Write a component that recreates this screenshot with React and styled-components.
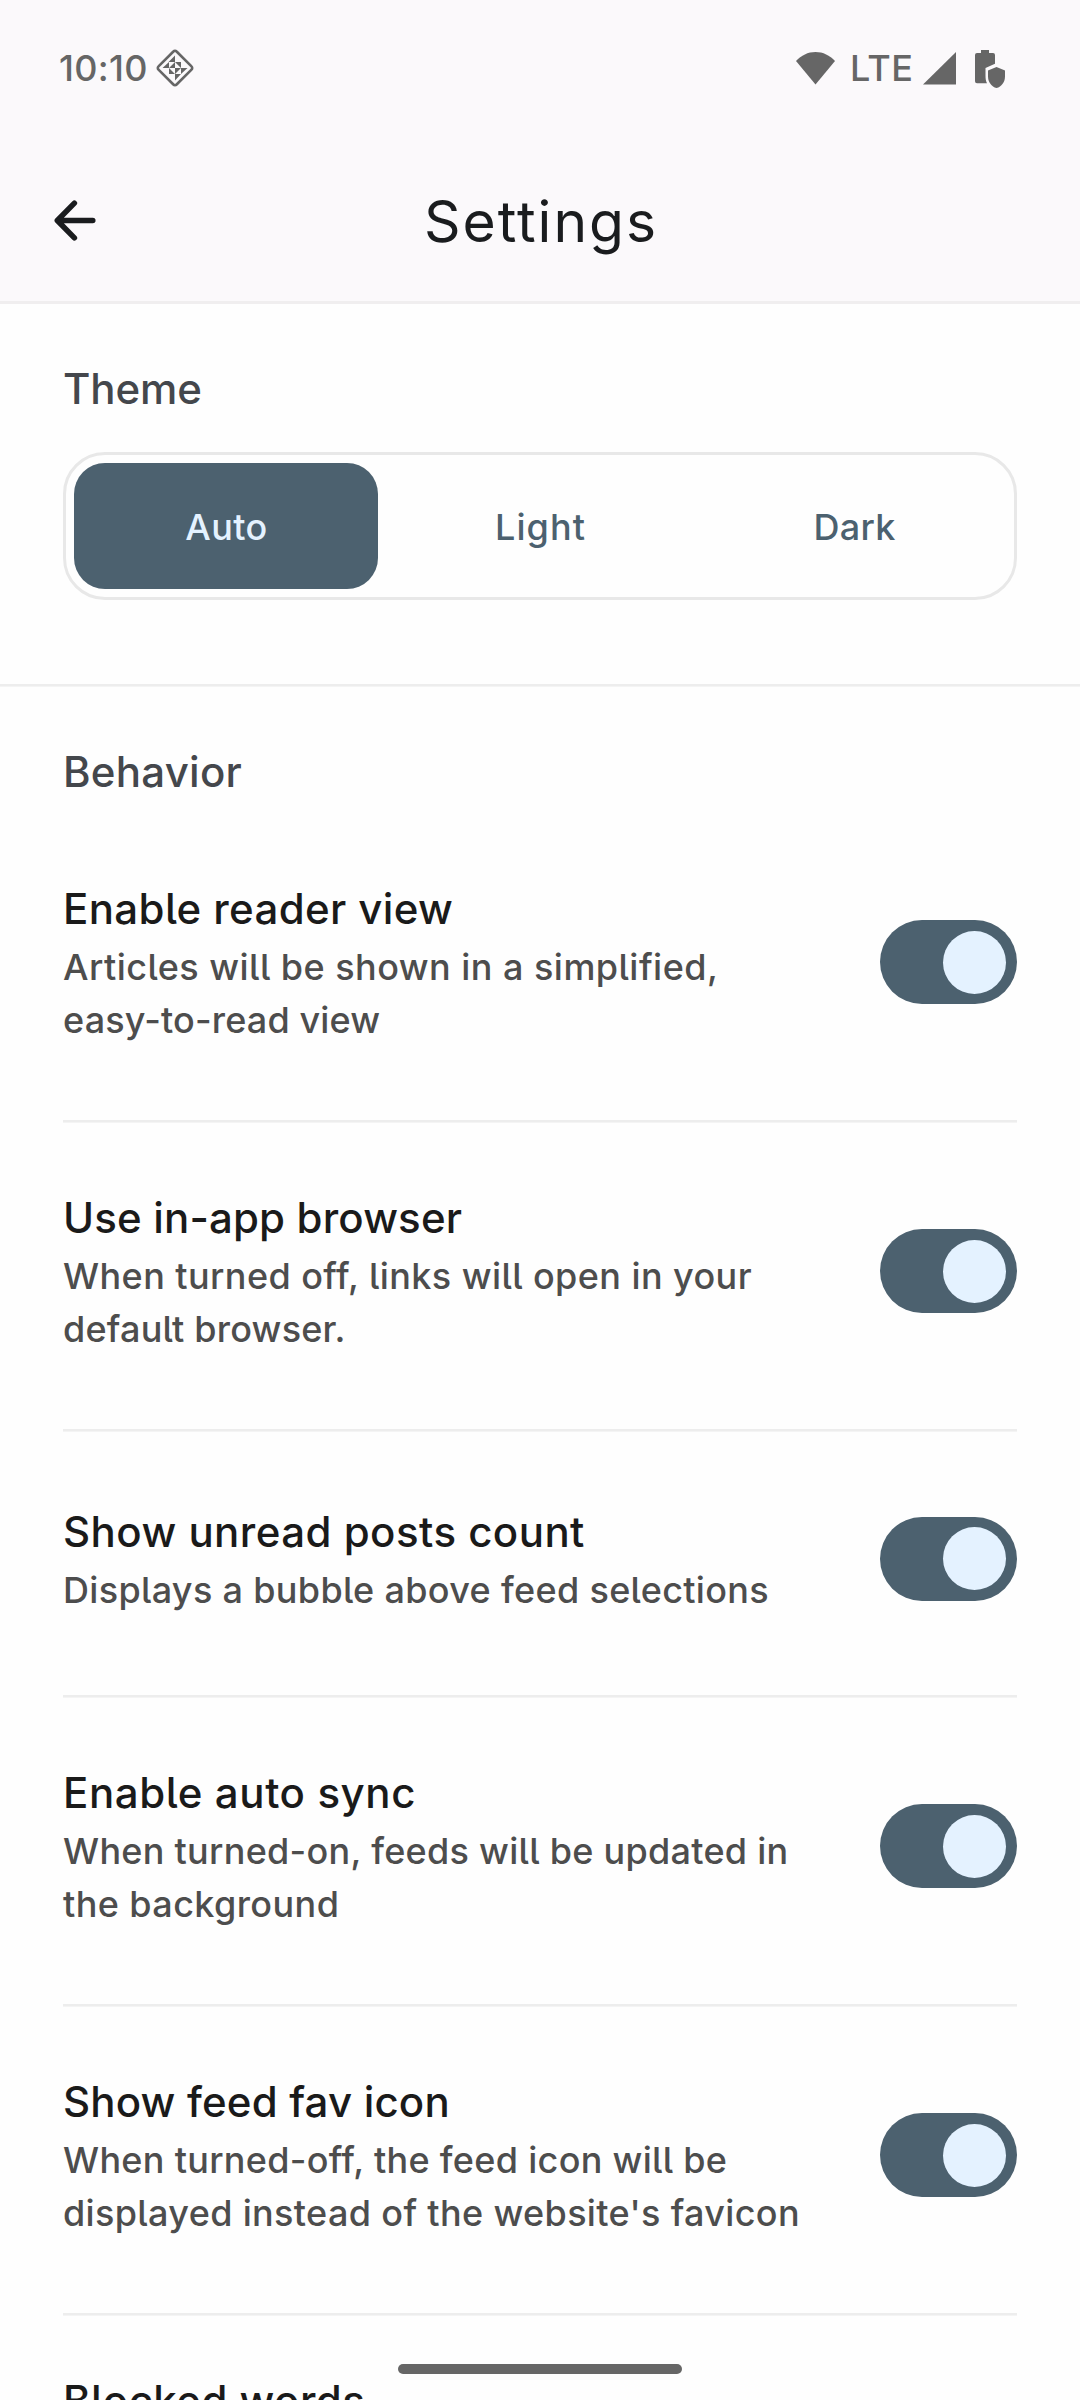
import React, { useState } from "react";
import styled, { createGlobalStyle } from "styled-components";

const slate = "#4c616f";
const ice = "#e4f2ff";

const GlobalStyle = createGlobalStyle`
  * { box-sizing: border-box; }
  body {
    margin: 0;
    background: #fefefe;
    font-family: Inter, "Liberation Sans", sans-serif;
    font-weight: 500;
    font-feature-settings: "cv05";
  }
`;

const Screen = styled.div`
  position: relative;
  width: 1080px;
  height: 2400px;
  overflow: hidden;
  background: #fefefe;
`;

const Header = styled.header`
  height: 304px;
  background: #fbf9fb;
  border-bottom: 3px solid #f0eeef;
`;

const StatusBar = styled.div`
  display: flex;
  align-items: center;
  height: 136px;
  padding: 0 75px 0 59px;
  color: #666;
  font-size: 36px;
  line-height: 44px;
`;

const Clock = styled.span`
  width: 97px;
  letter-spacing: 0.3px;
`;

const Spacer = styled.div`
  flex: 1;
`;

const Network = styled.span`
  width: 88px;
  padding-left: 15px;
  letter-spacing: 0.4px;
`;

const BatterySlot = styled.span`
  display: flex;
  margin-left: 19px;
  padding-top: 2px;
`;

const AppBar = styled.div`
  display: grid;
  grid-template-columns: 150px 1fr 150px;
  align-items: center;
  height: 165px;
  padding-top: 4px;
`;

const BackButton = styled.button`
  display: flex;
  padding: 0 0 0 54px;
  border: 0;
  background: none;
`;

const PageTitle = styled.h1`
  margin: 0;
  padding: 2px 0 0 2px;
  color: #1a1c1e;
  font-size: 57px;
  font-weight: 400;
  line-height: 64px;
  letter-spacing: 2px;
  text-align: center;
`;

const Section = styled.section`
  padding: 59px 63px 0;
`;

const SectionLabel = styled.h2`
  margin: 0;
  color: #44474c;
  font-size: 42px;
  font-weight: 500;
  line-height: 52px;
  letter-spacing: ${(p) => p.$spacing}px;
`;

const Segmented = styled.div`
  display: grid;
  grid-template-columns: repeat(3, 304px);
  justify-content: space-between;
  height: 148px;
  margin: 37px 0 84px;
  padding: 8px;
  border: 3px solid #e8e8e8;
  border-radius: 42px;
`;

const Segment = styled.button`
  padding: 2px 0 0 1px;
  border: 0;
  border-radius: 31px;
  background: ${(p) => (p.$active ? slate : "transparent")};
  color: ${(p) => (p.$active ? ice : slate)};
  font: 500 36px/44px Inter, "Liberation Sans", sans-serif;
  letter-spacing: ${(p) => p.$spacing}px;
`;

const Divider = styled.div`
  height: 3px;
  background: linear-gradient(#ededed 2px, #f4f4f4 2px);
`;

const List = styled.div`
  margin-top: 16px;
`;

const Row = styled.div`
  display: flex;
  align-items: center;
  justify-content: space-between;
  padding: ${(p) => (p.$single ? "70px 0 78px" : "65px 0 73px")};
`;

const RowTitle = styled.div`
  color: #1a1a1a;
  font-size: 42px;
  line-height: 60px;
  letter-spacing: ${(p) => p.$spacing}px;
  white-space: nowrap;
`;

const RowText = styled.div`
  padding-top: 2px;
  color: #4d4d4d;
  font-size: 36px;
  line-height: 53px;
`;

const Line = styled.span`
  display: block;
  letter-spacing: ${(p) => p.$spacing}px;
  white-space: nowrap;
`;

const Switch = styled.button`
  display: flex;
  align-items: center;
  justify-content: ${(p) => (p.$on ? "flex-end" : "flex-start")};
  width: 137px;
  height: 84px;
  margin: 0 0 2px;
  padding: 0 11px;
  border: 0;
  border-radius: 42px;
  background: ${(p) => (p.$on ? slate : "#d5dbe0")};
`;

const Thumb = styled.span`
  width: 63px;
  height: 63px;
  border-radius: 50%;
  background: ${ice};
`;

const NextRow = styled.div`
  padding-top: 55px;
`;

const HomeIndicator = styled.div`
  position: absolute;
  left: 398px;
  bottom: 26px;
  width: 284px;
  height: 10px;
  border-radius: 5px;
  background: #666;
`;

const DiamondIcon = () => (
  <svg width="38" height="38" viewBox="0 0 38 38" fill="#666">
    <path
      d="M17.4 2.5 2.5 17.4a2.2 2.2 0 0 0 0 3.2l14.9 14.9a2.2 2.2 0 0 0 3.2 0l14.9-14.9a2.2 2.2 0 0 0 0-3.2L20.6 2.5a2.2 2.2 0 0 0-3.2 0Z"
      fill="none"
      stroke="#666"
      strokeWidth="2.6"
    />
    <path d="M19 6.500V13H12.500ZM13 13V19H6.500ZM31.500 19H25V25ZM25 25H19V31.500ZM19 13H25V19ZM13 19V25H19ZM19 13V19H13ZM19 19H25L19 25Z" />
  </svg>
);

const WifiIcon = () => (
  <svg width="39" height="33" viewBox="0 0 39 33" fill="#666">
    <path d="M0 9C5.2 3.4 12 0 19.5 0S33.800 3.400 39 9L19.500 32.500Z" />
  </svg>
);

const SignalIcon = () => (
  <svg width="33" height="33" viewBox="0 0 33 33" fill="#666">
    <path d="M33 0V32.500H0Z" />
  </svg>
);

const BatteryShieldIcon = () => (
  <svg width="30" height="38" viewBox="0 0 30 38" fill="#666">
    <path d="M6 0H14V3H18Q20 3 20 5V13.800L10.500 18V25.500C10.500 28.500 10.800 31 12 33.300H2Q0 33.300 0 31.300V5Q0 3 2 3H6Z" />
    <path d="M21.500 17 30 20.500V26.500C30 32 26.500 36.800 21.500 38C16.500 36.800 13 32 13 26.500V20.500Z" />
  </svg>
);

const BackIcon = () => (
  <svg
    width="42"
    height="42"
    viewBox="0 0 42 42"
    fill="none"
    stroke="#1a1c1e"
    strokeWidth="5.500"
    strokeLinecap="round"
    strokeLinejoin="round"
  >
    <path d="M38.800 20.500H3.500M20.400 3.100 3.300 20.500 20.400 37.900" />
  </svg>
);

const themes = [
  { name: "Auto", spacing: 0.4 },
  { name: "Light", spacing: 1.1 },
  { name: "Dark", spacing: 0.3 },
];

const options = [
  {
    title: "Enable reader view",
    spacing: 0.37,
    lines: [
      ["Articles will be shown in a simplified,", 0.47],
      ["easy-to-read view", 0.15],
    ],
  },
  {
    title: "Use in-app browser",
    spacing: 0.16,
    lines: [
      ["When turned off, links will open in your", 0.42],
      ["default browser.", 0.2],
    ],
  },
  {
    title: "Show unread posts count",
    spacing: 0.46,
    lines: [["Displays a bubble above feed selections", 0.33]],
  },
  {
    title: "Enable auto sync",
    spacing: 0.6,
    lines: [
      ["When turned-on, feeds will be updated in", 0.28],
      ["the background", 0.4],
    ],
  },
  {
    title: "Show feed fav icon",
    spacing: 0.18,
    lines: [
      ["When turned-off, the feed icon will be", 0.3],
      ["displayed instead of the website's favicon", 0.35],
    ],
  },
];

function Option({ title, spacing, lines }) {
  const [on, setOn] = useState(true);
  return (
    <>
      <Row $single={lines.length === 1}>
        <div>
          <RowTitle $spacing={spacing}>{title}</RowTitle>
          <RowText>
            {lines.map(([text, gap]) => (
              <Line key={text} $spacing={gap}>
                {text}
              </Line>
            ))}
          </RowText>
        </div>
        <Switch role="switch" aria-checked={on} $on={on} onClick={() => setOn(!on)}>
          <Thumb />
        </Switch>
      </Row>
      <Divider />
    </>
  );
}

export default function App() {
  const [theme, setTheme] = useState("Auto");
  return (
    <Screen>
      <GlobalStyle />
      <Header>
        <StatusBar>
          <Clock>10:10</Clock>
          <DiamondIcon />
          <Spacer />
          <WifiIcon />
          <Network>LTE</Network>
          <SignalIcon />
          <BatterySlot>
            <BatteryShieldIcon />
          </BatterySlot>
        </StatusBar>
        <AppBar>
          <BackButton aria-label="Back">
            <BackIcon />
          </BackButton>
          <PageTitle>Settings</PageTitle>
        </AppBar>
      </Header>
      <Section>
        <SectionLabel $spacing={-0.1}>Theme</SectionLabel>
        <Segmented>
          {themes.map(({ name, spacing }) => (
            <Segment
              key={name}
              $active={name === theme}
              $spacing={spacing}
              onClick={() => setTheme(name)}
            >
              {name}
            </Segment>
          ))}
        </Segmented>
      </Section>
      <Divider />
      <Section>
        <SectionLabel $spacing={0.25}>Behavior</SectionLabel>
        <List>
          {options.map((option) => (
            <Option key={option.title} {...option} />
          ))}
          <NextRow>
            <RowTitle $spacing={0.45}>Blocked words</RowTitle>
          </NextRow>
        </List>
      </Section>
      <HomeIndicator />
    </Screen>
  );
}
